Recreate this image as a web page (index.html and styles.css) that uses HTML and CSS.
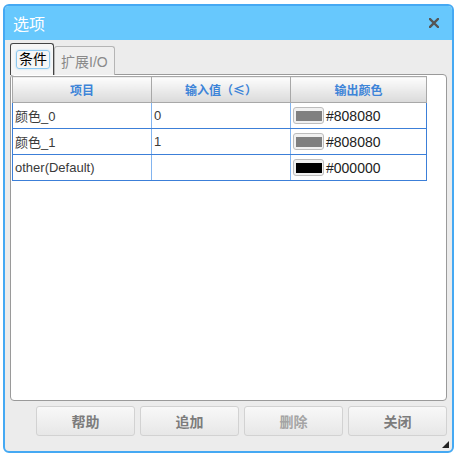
FILE: index.html
```html
<!DOCTYPE html>
<html>
<head>
<meta charset="utf-8">
<link rel="stylesheet" href="styles.css">
</head>
<body>
<div class="dialog">
  <div class="titlebar">
    <span class="title">选项</span>
    <svg class="close" width="10" height="10" viewBox="0 0 10 10"><path d="M1 1L9 9M9 1L1 9" stroke="#555" stroke-width="2.4" stroke-linecap="square"/></svg>
  </div>
  <div class="content">
    <div class="tabs">
      <div class="tab active"><span class="focus">条件</span></div>
      <div class="tab">扩展I/O</div>
    </div>
    <div class="panel">
      <table class="grid">
        <thead>
          <tr><th class="c1">项目</th><th class="c2">输入值（≤）</th><th class="c3">输出颜色</th></tr>
        </thead>
        <tbody>
          <tr><td class="first">颜色_0</td><td>0</td><td class="last"><span class="swatch"><span class="fill gray"></span></span><span class="hex">#808080</span></td></tr>
          <tr><td class="first">颜色_1</td><td>1</td><td class="last"><span class="swatch"><span class="fill gray"></span></span><span class="hex">#808080</span></td></tr>
          <tr><td class="first">other(Default)</td><td></td><td class="last"><span class="swatch"><span class="fill black"></span></span><span class="hex">#000000</span></td></tr>
        </tbody>
      </table>
    </div>
    <div class="buttons">
      <button class="btn">帮助</button>
      <button class="btn">追加</button>
      <button class="btn disabled">删除</button>
      <button class="btn">关闭</button>
    </div>
  </div>
  <svg class="grip" width="7" height="7" viewBox="0 0 7 7"><path d="M7 0L7 7L0 7Z" fill="#222"/></svg>
</div>
</body>
</html>
```
FILE: styles.css
```css
html, body {
  margin: 0;
  padding: 0;
  background: #ffffff;
}
body {
  font-family: "Liberation Sans", "Noto Sans CJK SC", sans-serif;
}
.dialog {
  position: relative;
  margin: 4px 0 0 3px;
  width: 451px;
  height: 449px;
  box-sizing: border-box;
  border: 2px solid #45a9f3;
  border-radius: 6px;
  background: #ececec;
  display: flex;
  flex-direction: column;
  overflow: hidden;
}
.titlebar {
  height: 34px;
  flex: none;
  background: #67c8fd;
  display: flex;
  align-items: center;
  padding-left: 8px;
}
.title {
  color: #ffffff;
  font-size: 16px;
  font-family: "Noto Sans CJK SC", sans-serif;
}
.close {
  margin-left: auto;
  margin-right: 13px;
}
.content {
  flex: 1;
  display: flex;
  flex-direction: column;
  padding: 4px 5px 0 5px;
}
.tabs {
  display: flex;
  align-items: flex-end;
  height: 31px;
  position: relative;
  z-index: 1;
  margin-bottom: -1px;
}
.tab {
  box-sizing: border-box;
  height: 29px;
  padding: 0 6px;
  border: 1px solid #b5b5b5;
  border-bottom: none;
  border-radius: 3px 3px 0 0;
  background: #efefef;
  color: #8a8a8a;
  font-size: 14px;
  display: flex;
  align-items: center;
  font-family: "Liberation Sans", "Noto Sans CJK SC", sans-serif;
}
.tab.active {
  height: 32px;
  width: 44px;
  padding: 0 0 0 5px;
  border-color: #444;
  background: #f6f6f6;
  color: #000;
}
.focus {
  border: 1px solid #8cc8f0;
  border-radius: 3px;
  box-shadow: 0 0 2px #a8d8f8;
  padding: 0 2px;
  line-height: 17px;
}
.panel {
  height: 327px;
  box-sizing: border-box;
  border: 1px solid #9a9a9a;
  border-radius: 4px;
  background: #ffffff;
  padding: 1px;
}
.grid {
  border-collapse: collapse;
  width: 415px;
  table-layout: fixed;
  font-size: 13px;
}
.grid th {
  height: 25px;
  padding: 0;
  border: 1px solid #a8a8a8;
  background: linear-gradient(#fdfdfd, #dadada);
  color: #3d84d8;
  font-size: 12px;
  font-weight: bold;
  text-align: center;
  font-family: "Noto Sans CJK SC", sans-serif;
}
.grid th.c1 { width: 138px; }
.grid th.c2 { width: 138px; }
.grid td {
  height: 25px;
  padding: 0 0 0 2px;
  border-top: 1px solid #3c7fd8;
  border-bottom: 1px solid #3c7fd8;
  border-left: 1px solid #82b4ef;
  border-right: 1px solid #82b4ef;
  color: #3a3a3a;
  vertical-align: middle;
  white-space: nowrap;
}
.grid td.first { border-left: 1px solid #3c7fd8; }
.grid td.last { border-left: 1px solid #5b95e0; border-right: 1px solid #3c7fd8; }
.swatch {
  display: inline-flex;
  align-items: center;
  justify-content: center;
  box-sizing: border-box;
  width: 31px;
  height: 17px;
  border: 1px solid #bdbdbd;
  border-radius: 3px;
  background: #f1f1f1;
  vertical-align: middle;
}
.fill {
  display: block;
  width: 26px;
  height: 10px;
}
.fill.gray { background: #808080; }
.fill.black { background: #000000; }
.hex {
  font-size: 14px;
  margin-left: 2px;
  vertical-align: middle;
  color: #222;
}
.buttons {
  display: flex;
  justify-content: flex-end;
  gap: 5px;
  margin-top: 5px;
}
.btn {
  width: 99px;
  height: 30px;
  box-sizing: border-box;
  border: 1px solid #d2d2d2;
  border-radius: 3px;
  background: linear-gradient(#f8f8f8, #e7e7e7);
  color: #7c7c7c;
  font-size: 14px;
  font-weight: bold;
  font-family: "Noto Sans CJK SC", sans-serif;
  padding: 0;
}
.btn.disabled {
  color: #a4a4a4;
}
.grip {
  position: absolute;
  right: 3px;
  bottom: 3px;
}
```
